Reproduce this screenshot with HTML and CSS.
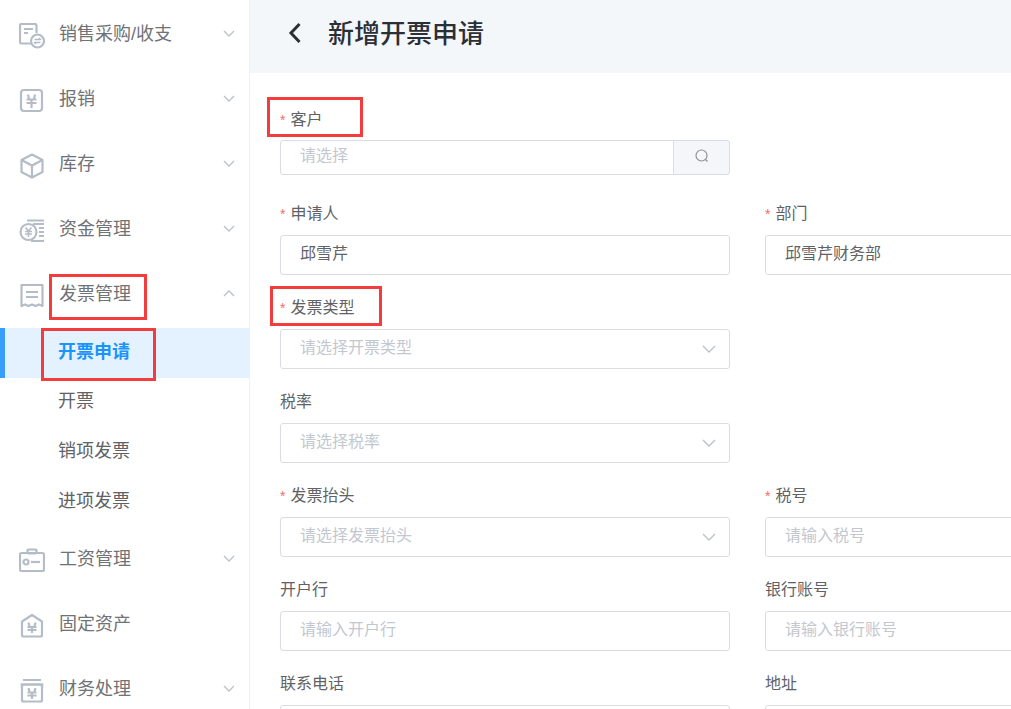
FILE: index.html
```html
<!DOCTYPE html>
<html lang="zh-CN">
<head>
<meta charset="utf-8">
<title>新增开票申请</title>
<link rel="stylesheet" href="styles.css">
</head>
<body>
<div class="app">
  <aside class="sidebar">
    <div class="menu-title">
      <svg class="menu-icon" viewBox="0 0 26 26"><path d="M12 20.500H2.500A1.500 1.500 0 0 1 1 19V2.500A1.500 1.500 0 0 1 2.500 1H16a1.500 1.500 0 0 1 1.500 1.500V10"/><path d="M5 6h9M5 10h4"/><circle cx="18.500" cy="18" r="6.500"/><path class="thin" d="M15.500 16.500h6l-1.500-1.300M21.500 19.500h-6l1.500 1.300"/></svg>
      <span class="menu-text">销售采购/收支</span>
      <svg class="chevron" viewBox="0 0 12 7"><path d="M1 1l5 5 5-5"/></svg>
    </div>
    <div class="menu-title">
      <svg class="menu-icon" viewBox="0 0 26 26"><rect x="2" y="2" width="21" height="21" rx="3"/><path d="M9 6.500l1 4.500M16 6.500l-1 4.500M7.500 11.500h10M7.500 15h10M12.500 11.500V20"/></svg>
      <span class="menu-text">报销</span>
      <svg class="chevron" viewBox="0 0 12 7"><path d="M1 1l5 5 5-5"/></svg>
    </div>
    <div class="menu-title">
      <svg class="menu-icon" viewBox="0 0 26 26"><path d="M13 1.500l10.500 5.500v12L13 24.500 2.500 19V7z"/><path d="M2.500 7L13 12.500 23.500 7M13 12.500v12"/></svg>
      <span class="menu-text">库存</span>
      <svg class="chevron" viewBox="0 0 12 7"><path d="M1 1l5 5 5-5"/></svg>
    </div>
    <div class="menu-title">
      <svg class="menu-icon" viewBox="0 0 26 26"><circle cx="9.500" cy="14" r="8"/><path class="thin" d="M6.500 9.500l3 3.500 3-3.500M6 13.500h7M6 16h7M9.500 13v6"/><path d="M8 2.500h17M14 6h11M20 10h5M20 14h5M20 18h5M12 23h13"/></svg>
      <span class="menu-text">资金管理</span>
      <svg class="chevron" viewBox="0 0 12 7"><path d="M1 1l5 5 5-5"/></svg>
    </div>
    <div class="menu-title">
      <svg class="menu-icon" viewBox="0 0 26 26"><path d="M2.500 2h21v21l-3.500-1.500-3.500 1.500-3.500-1.500-3.500 1.500L6 21.500 2.500 23z"/><path d="M7 9h12M7 14h12"/></svg>
      <span class="menu-text">发票管理</span>
      <svg class="chevron" viewBox="0 0 12 7"><path d="M1 6l5-5 5 5"/></svg>
      <span class="mark mark-menu"></span>
    </div>
    <ul class="submenu">
      <li class="sub-item active">开票申请<span class="mark mark-sub"></span></li>
      <li class="sub-item">开票</li>
      <li class="sub-item">销项发票</li>
      <li class="sub-item">进项发票</li>
    </ul>
    <div class="menu-title">
      <svg class="menu-icon" viewBox="0 0 26 26"><rect x="1" y="5" width="24" height="18" rx="1.500"/><rect x="8.500" y="1.500" width="9" height="4" rx="1"/><circle cx="7" cy="14" r="2.500"/><path d="M12 14h9"/></svg>
      <span class="menu-text">工资管理</span>
      <svg class="chevron" viewBox="0 0 12 7"><path d="M1 1l5 5 5-5"/></svg>
    </div>
    <div class="menu-title">
      <svg class="menu-icon" viewBox="0 0 26 26"><path d="M13 2l10 6.500V22a1.500 1.500 0 0 1-1.500 1.500h-17A1.500 1.500 0 0 1 3 22V8.500z"/><path d="M9.500 9.500l1 4M16.500 9.500l-1 4M8.500 14h9M8.500 17h9M13 14v6"/></svg>
      <span class="menu-text">固定资产</span>
    </div>
    <div class="menu-title">
      <svg class="menu-icon" viewBox="0 0 26 26"><path d="M4 2h18M1.500 6.500h23"/><rect x="3" y="6.500" width="20" height="17" rx="1.500"/><path d="M9.500 10l1 3.500M16.500 10l-1 3.500M8.500 14.500h9M8.500 17.500h9M13 14.500V21"/></svg>
      <span class="menu-text">财务处理</span>
      <svg class="chevron" viewBox="0 0 12 7"><path d="M1 1l5 5 5-5"/></svg>
    </div>
  </aside>

  <main class="main">
    <header class="page-header">
      <svg class="back" viewBox="0 0 14 22"><path d="M11.500 2L3 11l8.500 9"/></svg>
      <h1 class="page-title">新增开票申请</h1>
    </header>
    <form class="form">
      <div class="field field-compact">
        <label class="label"><span class="req">*</span>客户<span class="mark mark-customer"></span></label>
        <div class="search-group">
          <input class="input input-compact" placeholder="请选择">
          <button class="search-btn" type="button"><svg class="search-icon" viewBox="0 0 16 16"><circle cx="7.500" cy="7.500" r="5.500"/><path d="M11.500 11.500l2 2"/></svg></button>
        </div>
      </div>
      <div class="field"></div>

      <div class="field">
        <label class="label"><span class="req">*</span>申请人</label>
        <input class="input" value="邱雪芹">
      </div>
      <div class="field">
        <label class="label"><span class="req">*</span>部门</label>
        <input class="input" value="邱雪芹财务部">
      </div>

      <div class="field">
        <label class="label"><span class="req">*</span>发票类型<span class="mark mark-type"></span></label>
        <div class="select"><input class="input" placeholder="请选择开票类型"><svg class="select-arrow" viewBox="0 0 14 8"><path d="M1 1l6 6 6-6"/></svg></div>
      </div>
      <div class="field"></div>

      <div class="field">
        <label class="label">税率</label>
        <div class="select"><input class="input" placeholder="请选择税率"><svg class="select-arrow" viewBox="0 0 14 8"><path d="M1 1l6 6 6-6"/></svg></div>
      </div>
      <div class="field"></div>

      <div class="field">
        <label class="label"><span class="req">*</span>发票抬头</label>
        <div class="select"><input class="input" placeholder="请选择发票抬头"><svg class="select-arrow" viewBox="0 0 14 8"><path d="M1 1l6 6 6-6"/></svg></div>
      </div>
      <div class="field">
        <label class="label"><span class="req">*</span>税号</label>
        <input class="input" placeholder="请输入税号">
      </div>

      <div class="field">
        <label class="label">开户行</label>
        <input class="input" placeholder="请输入开户行">
      </div>
      <div class="field">
        <label class="label">银行账号</label>
        <input class="input" placeholder="请输入银行账号">
      </div>

      <div class="field">
        <label class="label">联系电话</label>
        <input class="input">
      </div>
      <div class="field">
        <label class="label">地址</label>
        <input class="input">
      </div>
    </form>
  </main>
</div>
</body>
</html>
```

FILE: styles.css
```css
* { box-sizing: border-box; }
html, body {
  margin: 0;
  height: 709px;
  overflow: hidden;
  background: #fff;
}
body {
  font-family: "Noto Sans CJK SC", "Liberation Sans", sans-serif;
  color: #606266;
}
.app { display: flex; height: 709px; overflow: hidden; }

.sidebar {
  flex: 0 0 250px;
  width: 250px;
  padding-top: 8px;
  border-right: 1px solid #eef0f3;
}
.menu-title {
  position: relative;
  display: flex;
  align-items: center;
  height: 50px;
  margin-bottom: 15px;
  padding-left: 19px;
  font-size: 18px;
  color: #6f7276;
}
.menu-icon {
  flex: none;
  width: 26px;
  height: 26px;
  margin-top: 5px;
  margin-right: 14px;
  fill: none;
  stroke: #b4bdc7;
  stroke-width: 2.200;
  stroke-linejoin: round;
}
.menu-icon .thin { stroke-width: 1.600; }
.menu-text {
  flex: 1;
  margin-top: 2px;
  font-family: "Liberation Sans", "Noto Sans CJK SC", sans-serif;
  line-height: 26px;
  white-space: nowrap;
}
.chevron {
  flex: none;
  width: 12px;
  height: 7px;
  margin-right: 14px;
  fill: none;
  stroke: #bcc1c7;
  stroke-width: 1.300;
}
.submenu {
  list-style: none;
  margin: -5px 0 5px;
  padding: 0;
}
.sub-item {
  position: relative;
  height: 50px;
  line-height: 42px;
  padding-left: 58px;
  font-size: 18px;
  color: #606266;
}
.sub-item.active {
  background: #e3f2fe;
  border-left: 5px solid #379efb;
  padding-left: 53px;
  line-height: 44px;
  color: #1c93fb;
  font-weight: 700;
}

.main { flex: 1; min-width: 0; }
.page-header {
  display: flex;
  align-items: center;
  height: 73px;
  padding: 0 0 7px 38px;
  background: #f4f7fa;
}
.back {
  width: 14px;
  height: 22px;
  margin-right: 26px;
  fill: none;
  stroke: #2b2f36;
  stroke-width: 3;
}
.page-title {
  margin: 0 0 2px;
  font-size: 26px;
  font-weight: 500;
  line-height: 36px;
  color: #2b2f36;
}

.form {
  display: grid;
  grid-template-columns: 450px 450px;
  column-gap: 35px;
  padding: 30px 0 0 30px;
  align-items: start;
}
.field { height: 94px; }
.field-compact { height: 95px; }
.label {
  position: relative;
  display: block;
  height: 37px;
  line-height: 28px;
  font-size: 16px;
  color: #606266;
  white-space: nowrap;
}
.field-compact .label { line-height: 30px; }
.req {
  display: inline-block;
  width: 10.500px;
  color: #f56c6c;
  font-size: 14px;
  font-family: "Liberation Sans", sans-serif;
}
.input {
  display: block;
  width: 100%;
  height: 40px;
  padding: 0 19px 6px;
  border: 1px solid #d9dde3;
  border-radius: 3px;
  outline: none;
  background: #fff;
  font: inherit;
  font-size: 16px;
  color: #606266;
}
.input::placeholder { color: #c3c7cf; opacity: 1; }
.input-compact { height: 35px; border-radius: 3px 0 0 3px; flex: 1; padding-bottom: 8px; }
.search-group { display: flex; }
.search-btn {
  flex: none;
  display: flex;
  align-items: center;
  justify-content: center;
  width: 57px;
  height: 35px;
  margin-left: -1px;
  padding: 0 0 3px;
  border: 1px solid #d9dde3;
  border-radius: 0 3px 3px 0;
  background: #f4f6f9;
}
.search-icon {
  width: 16px;
  height: 16px;
  fill: none;
  stroke: #8d939c;
  stroke-width: 1.200;
}
.select { position: relative; }
.select-arrow {
  position: absolute;
  top: 16px;
  right: 14px;
  width: 14px;
  height: 8px;
  fill: none;
  stroke: #bcc1c7;
  stroke-width: 1.300;
}

.mark {
  position: absolute;
  border: 3px solid #f33c3c;
  pointer-events: none;
}
.mark-menu { left: 49px; top: 6px; width: 98px; height: 46px; }
.mark-sub { left: 36px; top: 0; width: 115px; height: 53px; }
.mark-customer { left: -13px; top: -6px; width: 96px; height: 40px; }
.mark-type { left: -10px; top: -6px; width: 112px; height: 40px; }
```
